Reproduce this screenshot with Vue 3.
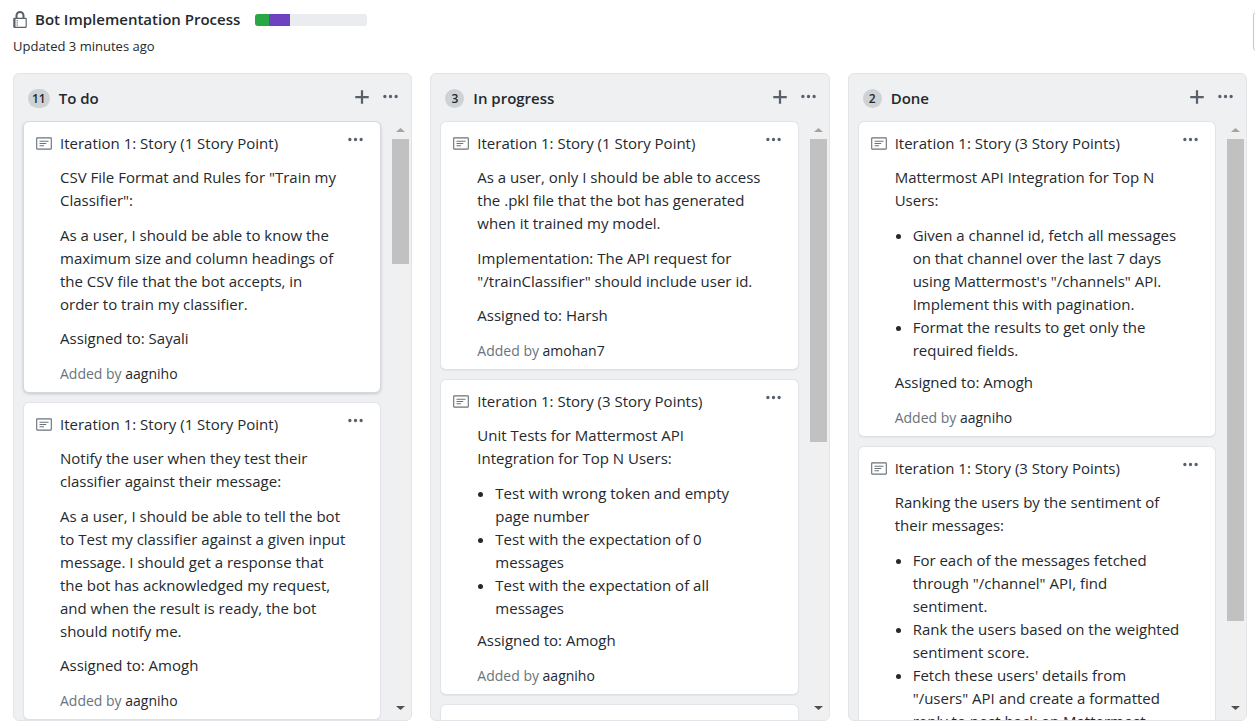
<script setup>
const columns = [
  {
    name: 'To do',
    count: 11,
    thumb: 22.2,
    cards: [
      {
        title: 'Iteration 1: Story (1 Story Point)',
        raised: true,
        author: 'aagniho',
        blocks: [
          { text: 'CSV File Format and Rules for "Train my Classifier":' },
          { text: 'As a user, I should be able to know the maximum size and column headings of the CSV file that the bot accepts, in\norder to train my classifier.' },
          { text: 'Assigned to: Sayali' },
        ],
      },
      {
        title: 'Iteration 1: Story (1 Story Point)',
        author: 'aagniho',
        blocks: [
          { text: 'Notify the user when they test their classifier against their message:' },
          { text: 'As a user, I should be able to tell the bot to Test my classifier against a given input message. I should get a response that the bot has acknowledged my request, and when the result is ready, the bot should notify me.' },
          { text: 'Assigned to: Amogh' },
        ],
      },
    ],
  },
  {
    name: 'In progress',
    count: 3,
    thumb: 53.8,
    cards: [
      {
        title: 'Iteration 1: Story (1 Story Point)',
        author: 'amohan7',
        blocks: [
          { text: 'As a user, only I should be able to access the .pkl file that the bot has generated when it trained my model.' },
          { text: 'Implementation: The API request for "/trainClassifier" should include user id.' },
          { text: 'Assigned to: Harsh' },
        ],
      },
      {
        title: 'Iteration 1: Story (3 Story Points)',
        author: 'aagniho',
        blocks: [
          { text: 'Unit Tests for Mattermost API Integration for Top N Users:' },
          {
            items: [
              'Test with wrong token and empty page number',
              'Test with the expectation of 0 messages',
              'Test with the expectation of all messages',
            ],
          },
          { text: 'Assigned to: Amogh' },
        ],
      },
      { blocks: [] },
    ],
  },
  {
    name: 'Done',
    count: 2,
    thumb: 85.5,
    cards: [
      {
        title: 'Iteration 1: Story (3 Story Points)',
        author: 'aagniho',
        blocks: [
          { text: 'Mattermost API Integration for Top N Users:' },
          {
            items: [
              'Given a channel id, fetch all messages on that channel over the last 7 days using Mattermost\'s "/channels" API. Implement this with pagination.',
              'Format the results to get only the required fields.',
            ],
          },
          { text: 'Assigned to: Amogh' },
        ],
      },
      {
        title: 'Iteration 1: Story (3 Story Points)',
        blocks: [
          { text: 'Ranking the users by the sentiment of their messages:' },
          {
            items: [
              'For each of the messages fetched through "/channel" API, find sentiment.',
              'Rank the users based on the weighted sentiment score.',
              'Fetch these users\' details from "/users" API and create a formatted reply to post back on Mattermost',
            ],
          },
        ],
      },
    ],
  },
]

const dots =
  'M1.5 9a1.5 1.5 0 100-3 1.5 1.5 0 000 3zm5 0a1.5 1.5 0 100-3 1.5 1.5 0 000 3zM13 7.5a1.5 1.5 0 11-3 0 1.5 1.5 0 013 0z'
</script>

<template>
  <div class="page">
    <header class="top">
      <div>
        <div class="heading">
          <svg class="lock" viewBox="0 0 12 16" aria-hidden="true">
            <path fill-rule="evenodd" d="M4 13H3v-1h1v1zm8-6v7c0 .55-.45 1-1 1H1c-.55 0-1-.45-1-1V7c0-.55.45-1 1-1h1V4c0-2.2 1.8-4 4-4s4 1.8 4 4v2h1c.55 0 1 .45 1 1zM3.8 6h4.41V4c0-1.22-.98-2.2-2.2-2.2-1.22 0-2.2.98-2.2 2.2v2H3.8zM11 7H2v7h9V7zM4 8H3v1h1V8zm0 2H3v1h1v-1z" />
          </svg>
          <h1>Bot Implementation Process</h1>
          <div class="progress"><span class="done"></span><span class="doing"></span></div>
        </div>
        <p class="updated">Updated 3 minutes ago</p>
      </div>
      <button class="edge" type="button" aria-label="Menu"></button>
    </header>

    <main class="board">
      <section v-for="col in columns" :key="col.name" class="column">
        <div class="column-head">
          <span class="count">{{ col.count }}</span>
          <h2>{{ col.name }}</h2>
          <button type="button" class="icon-btn plus" aria-label="Add">
            <svg width="14" height="18" viewBox="0 0 12 16"><path d="M12 9H7v5H5V9H0V7h5V2h2v5h5v2z" /></svg>
          </button>
          <button type="button" class="icon-btn" aria-label="More">
            <svg width="15" height="18" viewBox="0 0 13 16"><path :d="dots" /></svg>
          </button>
        </div>
        <div class="column-body">
          <div class="cards">
            <article v-for="(card, i) in col.cards" :key="i" class="card" :class="{ raised: card.raised }">
              <template v-if="card.title">
                <svg class="note" width="16" height="18" viewBox="0 0 14 16" aria-hidden="true">
                  <path fill-rule="evenodd" d="M3 10h4V9H3v1zm0-2h6V7H3v1zm0-2h8V5H3v1zm10 6H1V3h12v9zM1 2c-.55 0-1 .45-1 1v9c0 .55.45 1 1 1h12c.55 0 1-.45 1-1V3c0-.55-.45-1-1-1H1z" />
                </svg>
                <div class="content">
                  <h3>{{ card.title }}</h3>
                  <template v-for="(b, j) in card.blocks" :key="j">
                    <ul v-if="b.items"><li v-for="it in b.items" :key="it">{{ it }}</li></ul>
                    <p v-else>{{ b.text }}</p>
                  </template>
                  <div v-if="card.author" class="added">Added by <a href="#">{{ card.author }}</a></div>
                </div>
                <button type="button" class="icon-btn card-more" aria-label="More">
                  <svg width="15" height="18" viewBox="0 0 13 16"><path :d="dots" /></svg>
                </button>
              </template>
            </article>
          </div>
          <div class="scrollbar" aria-hidden="true">
            <svg class="up" width="9" height="4" viewBox="0 0 18 8"><path d="M0 8L9 0L18 8z" /></svg>
            <div class="track"><div class="thumb" :style="{ height: col.thumb + '%' }"></div></div>
            <svg class="down" width="9" height="4" viewBox="0 0 18 8"><path d="M0 0h18L9 8z" /></svg>
          </div>
        </div>
      </section>
    </main>
  </div>
</template>

<style>
body {
  margin: 0;
  background: #fff;
}
</style>

<style scoped>
.page {
  box-sizing: border-box;
  display: flex;
  flex-direction: column;
  height: 100vh;
  padding: 0 8px 2px 13px;
  overflow: hidden;
  font: 15px/23px "Segoe UI", "Open Sans", "Noto Sans", sans-serif;
  color: #24292e;
}
h1, h2, h3, p, ul {
  margin: 0;
  font-size: 15px;
  font-weight: 400;
}
.top {
  display: flex;
  justify-content: space-between;
  align-items: flex-start;
  margin-right: -8px;
  padding: 8px 0 15px;
  overflow: hidden;
}
.heading {
  display: flex;
  align-items: center;
}
.heading h1 {
  margin-left: 8px;
  font-weight: 600;
}
.lock {
  width: 14px;
  height: 18px;
  fill: #586069;
}
.progress {
  display: flex;
  width: 112px;
  height: 12px;
  margin-left: 15px;
  border-radius: 3px;
  overflow: hidden;
  background: #eaecef;
}
.done {
  width: 14px;
  background: #28a745;
}
.doing {
  width: 21px;
  background: #6f42c1;
}
.updated {
  margin-top: 4px;
  font-size: 13px;
}
.edge {
  width: 40px;
  height: 39px;
  margin: 4px -38px 0 0;
  border: 1px solid #c5c9cd;
  border-radius: 3px;
  background: #fafbfc;
}
.board {
  flex: 1;
  min-height: 0;
  display: grid;
  grid-template-columns: repeat(3, minmax(0, 1fr));
  gap: 18px;
}
.column {
  display: flex;
  flex-direction: column;
  min-height: 0;
  border: 1px solid #e1e4e8;
  border-radius: 6px;
  background: #eff0f2;
  overflow: hidden;
}
.column-head {
  box-sizing: border-box;
  display: flex;
  align-items: center;
  height: 47px;
  padding: 2px 13px 0 14px;
}
.column-head .icon-btn {
  padding-bottom: 4px;
}
.count {
  box-sizing: border-box;
  min-width: 19px;
  height: 19px;
  padding: 0 4px;
  border-radius: 10px;
  background: #cfd2d5;
  font-size: 12px;
  font-weight: 600;
  line-height: 19px;
  text-align: center;
}
.column-head h2 {
  flex: 1;
  margin-left: 9px;
  font-weight: 600;
}
.icon-btn {
  display: block;
  padding: 0;
  border: 0;
  background: none;
  line-height: 0;
  cursor: pointer;
}
.icon-btn svg {
  display: block;
  fill: #586069;
}
.plus {
  margin-right: 14px;
}
.column-body {
  flex: 1;
  display: flex;
  min-height: 0;
}
.cards {
  flex: 1;
  min-width: 0;
  padding: 0 10px 0 9px;
  overflow: hidden;
}
.card {
  display: flex;
  align-items: flex-start;
  min-height: 40px;
  margin-bottom: 9px;
  padding: 10px 17px 7px 12px;
  border: 1px solid #e1e4e8;
  border-bottom-color: #dce1e6;
  border-radius: 6px;
  background: #fff;
  box-shadow: 0 1px 1px #e1e4e8;
}
.raised {
  border-color: #d5d9de;
  box-shadow: 0 1px 3px #c3c7cc;
}
.note {
  flex: none;
  margin: 3px 8px 0 0;
  fill: #6a737d;
}
.content {
  flex: 1;
  min-width: 0;
}
.content p {
  white-space: pre-line;
}
.content p,
.content ul {
  margin-top: 12px;
}
.content h3 + p,
.content p:last-of-type {
  margin-top: 11px;
}
.content ul {
  padding-left: 18px;
}
.content ul + p:last-of-type {
  margin-top: 9px;
}
.added {
  margin-top: 12px;
  font-size: 14px;
  color: #6a737d;
}
.added a {
  color: #24292e;
  text-decoration: none;
}
.card-more {
  margin: -1px 0 0 2px;
}
.scrollbar {
  flex: none;
  display: flex;
  flex-direction: column;
  align-items: center;
  width: 17px;
  padding: 7px 2px 10px 1px;
  background: #f0f0f0;
}
.up {
  margin-bottom: 7px;
  fill: #a3a3a3;
}
.down {
  margin-top: 3px;
  fill: #505050;
}
.track {
  flex: 1;
  width: 100%;
}
.thumb {
  background: #c1c1c1;
}
</style>
